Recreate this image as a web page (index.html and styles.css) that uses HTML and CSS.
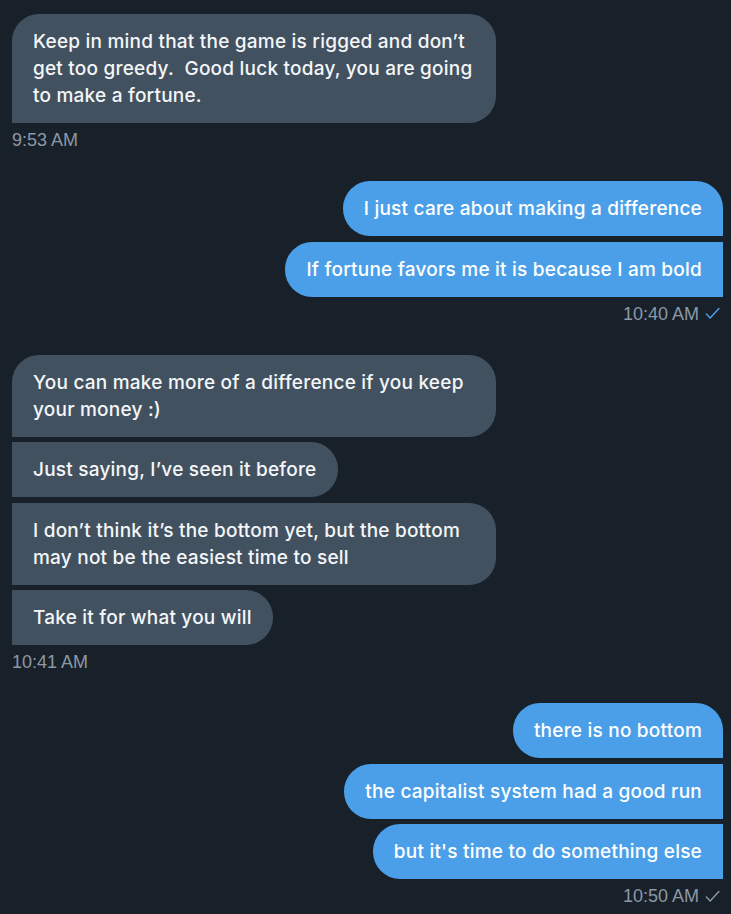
FILE: index.html
```html
<!DOCTYPE html>
<html lang="en">
<head>
<meta charset="utf-8">
<title>Messages</title>
<link rel="stylesheet" href="styles.css">
</head>
<body>
<main class="chat">
  <section class="group recv">
    <div class="stack">
      <div class="bubble">Keep in mind that the game is rigged and don’t get too greedy.&nbsp; Good luck today, you are going to make a fortune.</div>
    </div>
    <div class="time">9:53 AM</div>
  </section>

  <section class="group sent">
    <div class="stack">
      <div class="bubble">I just care about making a difference</div>
      <div class="bubble">If fortune favors me it is because I am bold</div>
    </div>
    <div class="time">10:40 AM <svg class="check read" viewBox="0 0 16 16" aria-hidden="true"><path d="M1.5 8.6l4 4.2L14.8 2.6"/></svg></div>
  </section>

  <section class="group recv">
    <div class="stack">
      <div class="bubble">You can make more of a difference if you keep your money :)</div>
      <div class="bubble">Just saying, I’ve seen it before</div>
      <div class="bubble">I don’t think it’s the bottom yet, but the bottom may not be the easiest time to sell</div>
      <div class="bubble">Take it for what you will</div>
    </div>
    <div class="time">10:41 AM</div>
  </section>

  <section class="group sent">
    <div class="stack">
      <div class="bubble">there is no bottom</div>
      <div class="bubble">the capitalist system had a good run</div>
      <div class="bubble">but it's time to do something else</div>
    </div>
    <div class="time">10:50 AM <svg class="check" viewBox="0 0 16 16" aria-hidden="true"><path d="M1.5 8.6l4 4.2L14.8 2.6"/></svg></div>
  </section>
</main>
</body>
</html>
```

FILE: styles.css
```css
* { box-sizing: border-box; }

html, body {
  margin: 0;
  padding: 0;
  background: #18202a;
}

.chat {
  display: flex;
  flex-direction: column;
  gap: 30px;
  padding: 14px 8px 0 12px;
  font-family: Inter, "Noto Sans", sans-serif;
}

.group {
  display: flex;
  flex-direction: column;
}

.recv { align-items: flex-start; }
.sent { align-items: flex-end; }

.stack {
  display: flex;
  flex-direction: column;
  gap: 5.5px;
}

.recv .stack { align-items: flex-start; }
.sent .stack { align-items: flex-end; }

.bubble {
  max-width: 484px;
  padding: 14px 21px;
  font-size: 19px;
  font-weight: 500;
  line-height: 27px;
  letter-spacing: 0.22px;
}

.recv .bubble {
  background: #425160;
  color: #f4f6f8;
  border-radius: 0 27px 27px 0;
}
.recv .bubble:first-child {
  border-radius: 27px 27px 27px 0;
}

.sent .bubble {
  background: #4b9fe9;
  color: #ffffff;
  border-radius: 27px 0 0 27px;
}
.sent .bubble:first-child {
  border-radius: 27px 27px 0 27px;
}

.time {
  display: flex;
  align-items: center;
  gap: 6px;
  margin-top: 6px;
  font-family: "Liberation Sans", Arial, sans-serif;
  font-size: 18px;
  line-height: 22px;
  color: #8b98a5;
}

.sent .time { margin-right: 3px; }

.check {
  width: 15px;
  height: 15px;
  fill: none;
  stroke: #8b98a5;
  stroke-width: 1.5;
  stroke-linecap: round;
  stroke-linejoin: round;
}
.check.read { stroke: #4b9fe9; }
```
